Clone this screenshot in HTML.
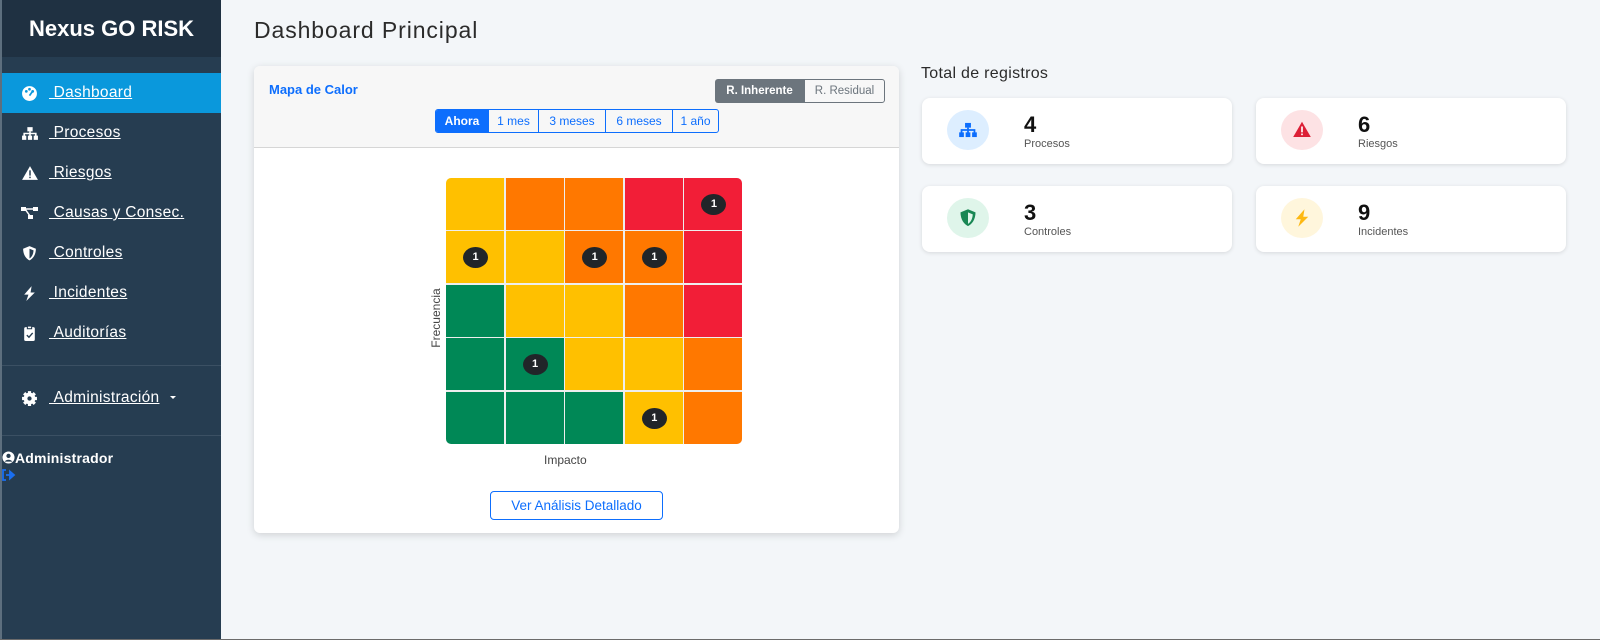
<!DOCTYPE html>
<html><head><meta charset="utf-8"><style>
*{box-sizing:border-box;margin:0;padding:0}
body{width:1600px;height:640px;background:#f3f6f9;font-family:"Liberation Sans",sans-serif;position:relative;overflow:hidden;color:#212529}
.sb{position:absolute;left:0;top:0;width:221px;height:639px;background:#263d51;border-left:2px solid #5d6f7e}
.sbh{position:absolute;left:0;top:0;width:219px;height:57px;background:#1f3142;color:#fff;font-weight:bold;font-size:22px;text-align:center;line-height:57px}
.it{position:absolute;left:0;width:219px;height:40px;color:#fff;font-size:15.5px;line-height:40px;letter-spacing:.3px}
.it svg{position:absolute;left:19px;top:12px}
.it span{position:absolute;left:47px;text-decoration:underline}
.act{background:#0a98dc}
.hr{position:absolute;left:0;width:219px;height:1px;background:#3b5063}
h1{position:absolute;left:254px;top:17px;font-size:23px;font-weight:normal;letter-spacing:.9px;color:#2b2b2b}
.card{position:absolute;left:254px;top:66px;width:645px;height:467px;background:#fff;border-radius:6px;box-shadow:0 2px 8px rgba(0,0,0,.15);overflow:hidden}
.ch{height:82px;background:#f7f7f7;border-bottom:1px solid #d6d6d6;position:relative}
.b{position:absolute;font-size:12px;text-align:center;line-height:23px}
.cell{position:absolute;width:58px;height:52px}
.dot{position:absolute;width:25px;height:21px;border-radius:50%;background:#212529;color:#fff;font-size:11px;font-weight:bold;text-align:center;line-height:21px}
.st{position:absolute;width:310px;height:66px;background:#fff;border-radius:8px;box-shadow:0 1px 4px rgba(0,0,0,.12)}
.ic{position:absolute;left:25px;top:12px;width:42px;height:40px;border-radius:50%}
.ic svg{position:absolute;left:11px;top:10px}
.num{position:absolute;left:102px;top:14px;font-size:22px;font-weight:bold;color:#111}
.lb{position:absolute;left:102px;top:40px;font-size:11px;color:#555}
</style></head><body>
<div class="sb">
<div class="sbh">Nexus GO RISK</div>
<div class="it act" style="top:73px"><svg width="17" height="17" viewBox="0 0 16 16"><circle cx="8" cy="8" r="7" fill="#fff"/><circle cx="5" cy="6" r="1.3" fill="#0a98dc"/><circle cx="8" cy="4" r="1.3" fill="#0a98dc"/><circle cx="11" cy="6" r="1.3" fill="#0a98dc"/><path d="M8 10 L10.5 6.5" stroke="#0a98dc" stroke-width="1.6"/></svg><span>&nbsp;Dashboard</span></div>
<div class="it" style="top:113px"><svg width="18" height="17" viewBox="0 0 17 16"><rect x="6" y="2" width="5" height="4" fill="#fff"/><path d="M3 11V8h11v3M8.5 6v5" stroke="#fff" stroke-width="1.5" fill="none"/><rect x="1" y="10" width="4" height="4" fill="#fff"/><rect x="6.5" y="10" width="4" height="4" fill="#fff"/><rect x="12" y="10" width="4" height="4" fill="#fff"/></svg><span>&nbsp;Procesos</span></div>
<div class="it" style="top:153px"><svg width="18" height="17" viewBox="0 0 17 16"><path d="M8.5 1L16 14H1z" fill="#fff"/><rect x="7.8" y="5" width="1.4" height="5" fill="#263d51"/><rect x="7.8" y="11" width="1.4" height="1.4" fill="#263d51"/></svg><span>&nbsp;Riesgos</span></div>
<div class="it" style="top:193px"><svg width="18" height="16" viewBox="0 0 18 16"><rect x="0" y="2" width="5" height="4" fill="#fff"/><rect x="12" y="2" width="5" height="4" fill="#fff"/><rect x="7" y="10" width="5" height="4" fill="#fff"/><path d="M4 4h9M4 4l5 7" stroke="#fff" stroke-width="1.5"/></svg><span>&nbsp;Causas y Consec.</span></div>
<div class="it" style="top:233px"><svg width="17" height="17" viewBox="0 0 16 16"><path d="M8 1l6 2.5c0 6-3 9.5-6 11-3-1.5-6-5-6-11z" fill="#fff"/><path d="M8 3.5l3.8 1.6c-.2 4-2 6.5-3.8 7.6z" fill="#263d51"/></svg><span>&nbsp;Controles</span></div>
<div class="it" style="top:273px"><svg width="17" height="17" viewBox="0 0 16 16"><path d="M10 1L3 9h4l-2 6 8-8H9z" fill="#fff"/></svg><span>&nbsp;Incidentes</span></div>
<div class="it" style="top:313px"><svg width="17" height="17" viewBox="0 0 16 16"><rect x="3" y="2" width="10" height="13" rx="1.5" fill="#fff"/><rect x="6" y="1" width="4" height="2.5" fill="#fff" stroke="#263d51"/><path d="M5.5 9.5l2 2 3.5-4" stroke="#263d51" stroke-width="1.3" fill="none"/></svg><span>&nbsp;Auditorías</span></div>
<div class="hr" style="top:365px"></div>
<div class="it" style="top:378px"><svg width="17" height="17" viewBox="0 0 16 16"><circle cx="8" cy="8" r="5.5" fill="#fff"/><g stroke="#fff" stroke-width="3"><path d="M8 1v14M1 8h14M3 3l10 10M13 3L3 13"/></g><circle cx="8" cy="8" r="2" fill="#263d51"/></svg><span>&nbsp;Administración</span><b style="position:absolute;left:168px;top:18px;border:3.5px solid transparent;border-top-color:#fff"></b></div>
<div class="hr" style="top:435px"></div>
<div style="position:absolute;left:0;top:450px;color:#fff;font-size:14px;font-weight:bold;letter-spacing:.2px"><svg width="13" height="13" viewBox="0 0 14 14" style="vertical-align:-1px"><circle cx="7" cy="7" r="6.5" fill="#fff"/><circle cx="7" cy="5.3" r="2.3" fill="#263d51"/><path d="M2.8 11.5c1.5-2.8 6.9-2.8 8.4 0" fill="#263d51"/></svg>Administrador</div>
<svg style="position:absolute;left:0;top:469px" width="14" height="12" viewBox="0 0 14 12"><path d="M4 1H1v10h3" stroke="#1a6ff0" stroke-width="1.8" fill="none"/><path d="M4 6h6M8 2.5l4 3.5-4 3.5z" stroke="#1a6ff0" stroke-width="1.8" fill="#1a6ff0"/></svg>
</div>
<div style="position:absolute;left:0;top:639px;width:1600px;height:1px;background:#6b6b6b"></div>
<h1>Dashboard Principal</h1>
<div class="card">
<div class="ch">
<div style="position:absolute;left:15px;top:16px;color:#0d6efd;font-weight:bold;font-size:13px">Mapa de Calor</div>
<div class="b" style="left:461px;top:13px;width:89px;height:24px;background:#6c757d;color:#fff;font-weight:bold;border-radius:3px 0 0 3px;font-size:11.5px;line-height:24px">R. Inherente</div>
<div class="b" style="left:550px;top:13px;width:81px;height:24px;border:1px solid #6c757d;color:#6c757d;border-radius:0 3px 3px 0;line-height:22px;font-size:11.5px">R. Residual</div>
<div style="position:absolute;left:181px;top:43px;height:24px;display:flex;border:1px solid #0d6efd;border-radius:3px;overflow:hidden">
<div class="b" style="position:static;width:52px;background:#0d6efd;color:#fff;font-weight:bold">Ahora</div>
<div class="b" style="position:static;width:50px;color:#0d6efd;border-left:1px solid #0d6efd">1 mes</div>
<div class="b" style="position:static;width:67px;color:#0d6efd;border-left:1px solid #0d6efd">3 meses</div>
<div class="b" style="position:static;width:67px;color:#0d6efd;border-left:1px solid #0d6efd">6 meses</div>
<div class="b" style="position:static;width:46px;color:#0d6efd;border-left:1px solid #0d6efd">1 año</div>
</div>
</div>
<div id="g" style="position:absolute;left:192px;top:112px;width:296px;height:266px;background:#eee;border-radius:5px;overflow:hidden">
</div>
<div style="position:absolute;left:175px;top:287px;transform:rotate(-90deg);transform-origin:0 0;font-size:12px;color:#444;width:70px;text-align:center">Frecuencia</div>
<div style="position:absolute;left:290px;top:387px;font-size:12px;color:#444">Impacto</div>
<div style="position:absolute;left:236px;top:425px;width:173px;height:29px;border:1px solid #0d6efd;border-radius:4px;color:#0d6efd;font-size:13.5px;text-align:center;line-height:27px">Ver Análisis Detallado</div>
</div>
<div style="position:absolute;left:921px;top:65px;font-size:16px;color:#2b2b2b;letter-spacing:.3px">Total de registros</div>
<div class="st" style="left:922px;top:98px"><div class="ic" style="background:#ddeeff"><svg width="20" height="20" viewBox="0 0 17 16"><rect x="6" y="2" width="5" height="4" fill="#0d6efd"/><path d="M3 11V8h11v3M8.5 6v5" stroke="#0d6efd" stroke-width="1.5" fill="none"/><rect x="1" y="10" width="4" height="4" fill="#0d6efd"/><rect x="6.5" y="10" width="4" height="4" fill="#0d6efd"/><rect x="12" y="10" width="4" height="4" fill="#0d6efd"/></svg></div><div class="num">4</div><div class="lb">Procesos</div></div>
<div class="st" style="left:1256px;top:98px"><div class="ic" style="background:#fde2e4"><svg width="20" height="20" viewBox="0 0 17 16"><path d="M8.5 1L16 14H1z" fill="#dc1f36"/><rect x="7.8" y="5" width="1.4" height="5" fill="#fff"/><rect x="7.8" y="11" width="1.4" height="1.4" fill="#fff"/></svg></div><div class="num">6</div><div class="lb">Riesgos</div></div>
<div class="st" style="left:922px;top:186px"><div class="ic" style="background:#dff5ea"><svg width="20" height="20" viewBox="0 0 16 16"><path d="M8 1l6 2.5c0 6-3 9.5-6 11-3-1.5-6-5-6-11z" fill="#198754"/><path d="M8 3.5l3.8 1.6c-.2 4-2 6.5-3.8 7.6z" fill="#dff5ea"/></svg></div><div class="num">3</div><div class="lb">Controles</div></div>
<div class="st" style="left:1256px;top:186px"><div class="ic" style="background:#fff6dc"><svg width="20" height="20" viewBox="0 0 16 16"><path d="M10 1L3 9h4l-2 6 8-8H9z" fill="#fdb812"/></svg></div><div class="num">9</div><div class="lb">Incidentes</div></div>
<script>
var c={Y:"#ffc000",O:"#ff7800",R:"#f21e37",G:"#008856"};
var m=["YOORR","YYOOR","GYYOR","GGYYO","GGGYO"];
var d={"0,4":1,"1,0":1,"1,2":1,"1,3":1,"3,1":1,"4,3":1};
var g=document.getElementById('g'),h="";
for(var r=0;r<5;r++)for(var k=0;k<5;k++){var x=k*59.6,y=r*53.4;
h+='<div class="cell" style="left:'+x+'px;top:'+y+'px;width:58px;height:52px;background:'+c[m[r][k]]+'"></div>';
if(d[r+','+k])h+='<div class="dot" style="left:'+(x+17)+'px;top:'+(y+16)+'px">1</div>';}
g.innerHTML=h;
</script>
</body></html>
